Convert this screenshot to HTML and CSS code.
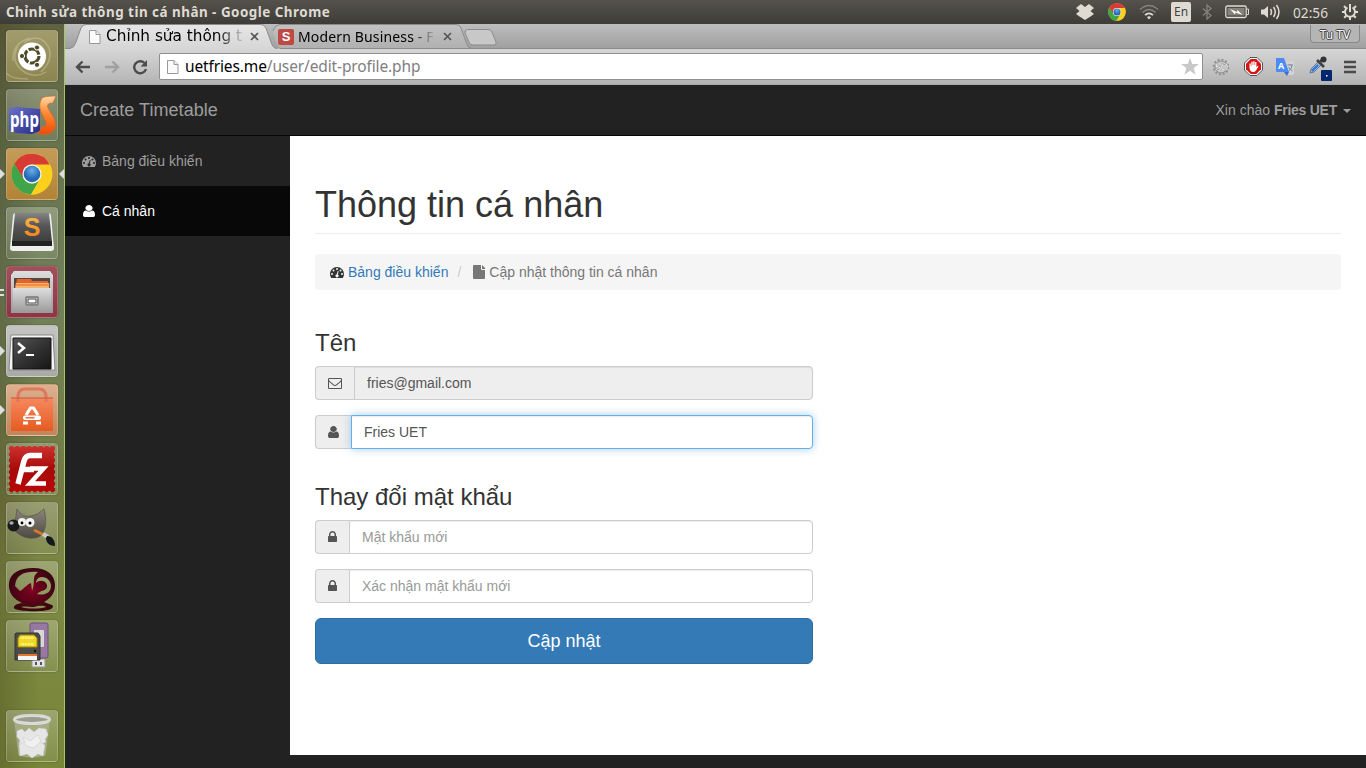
FILE: index.html
```html
<!DOCTYPE html>
<html lang="vi">
<head>
<meta charset="utf-8">
<title>Chỉnh sửa thông tin cá nhân</title>
<link rel="stylesheet" href="styles.css">
</head>
<body>
<svg class="defs" width="0" height="0">
  <defs>
    <linearGradient id="gTab" x2="0" y2="1"><stop stop-color="#e6e6e6"/><stop offset="1" stop-color="#d6d6d6"/></linearGradient>
    <linearGradient id="gTab2" x2="0" y2="1"><stop stop-color="#c2c2c2"/><stop offset="1" stop-color="#b0b0b0"/></linearGradient>
    <linearGradient id="gDark" x2="0" y2="1"><stop stop-color="#858585"/><stop offset=".45" stop-color="#555"/><stop offset="1" stop-color="#3d3d3d"/></linearGradient>
    <linearGradient id="gTerm" x2="1" y2="1"><stop stop-color="#555"/><stop offset=".5" stop-color="#333"/><stop offset="1" stop-color="#161616"/></linearGradient>
    <linearGradient id="gGrey" x2="0" y2="1"><stop stop-color="#dedede"/><stop offset="1" stop-color="#999"/></linearGradient>
    <linearGradient id="gBag" x2="0" y2="1"><stop stop-color="#f5895e"/><stop offset="1" stop-color="#e75b22"/></linearGradient>
    <linearGradient id="gS" x2="0" y2="1"><stop stop-color="#ffc24d"/><stop offset="1" stop-color="#f07818"/></linearGradient>
    <linearGradient id="gPs" x2="0" y2="1"><stop stop-color="#ffd9a8"/><stop offset=".45" stop-color="#fb8a34"/><stop offset="1" stop-color="#f04a08"/></linearGradient>
    <linearGradient id="gPhp" x2="1" y2="1"><stop stop-color="#6a72c8"/><stop offset="1" stop-color="#26298a"/></linearGradient>
    <linearGradient id="gFz" x2="0" y2="1"><stop stop-color="#cf3030"/><stop offset=".5" stop-color="#a80a0a"/><stop offset="1" stop-color="#b80808"/></linearGradient>
    <linearGradient id="gGimp" x2="0" y2="1"><stop stop-color="#8a857a"/><stop offset="1" stop-color="#4d4a43"/></linearGradient>
    <radialGradient id="gWine"><stop stop-color="#84001f"/><stop offset="1" stop-color="#3a0612"/></radialGradient>
    <radialGradient id="gBlue" cy=".3"><stop stop-color="#6aaee6"/><stop offset="1" stop-color="#2468b4"/></radialGradient>
    <symbol id="chrome" viewBox="0 0 42 42">
      <circle cx="21" cy="21" r="20.5" fill="#f9d21c"/>
      <path d="M3.2 10.8A20.5 20.5 0 0 1 38.8 11.5L21 11.5A9.5 9.5 0 0 0 12.8 16.2L12 25.5z" fill="#d83a34"/>
      <path d="M3.2 10.8A20.5 20.5 0 0 0 20 41.500L29.200 25.800A9.500 9.500 0 0 1 12.800 25.800z" fill="#3fa548"/>
      <path d="M20 41.500A20.500 20.500 0 0 0 38.800 12.500H21L29.500 25.500z" fill="#fbd01c"/>
      <circle cx="21" cy="21" r="9.600" fill="#f4f4f4"/><circle cx="21" cy="21" r="8.300" fill="url(#gBlue)"/>
    </symbol>
    <symbol id="page" viewBox="0 0 12 14"><path d="M.5.5h6.500l4 4v9H.5z" fill="#fbfbfb" stroke="#999"/><path d="M7 .5v4h4" fill="#ececec" stroke="#999"/></symbol>
    <symbol id="user" viewBox="256 0 1280 1792" preserveAspectRatio="none"><path d="M1536 1399q0 109-62.500 187t-150.500 78h-854q-88 0-150.500-78t-62.500-187q0-85 8.500-160.500t31.500-152 58.500-131 94-89 134.500-34.500q131 128 313 128t313-128q76 0 134.500 34.500t94 89 58.500 131 31.500 152 8.500 160.500zm-256-887q0 159-112.500 271.500t-271.500 112.500-271.500-112.500-112.500-271.500 112.500-271.500 271.500-112.500 271.500 112.500 112.500 271.500z"/></symbol>
    <symbol id="lock" viewBox="320 0 1152 1792"><path d="M640 768h512v-192q0-106-75-181t-181-75-181 75-75 181v192zm832 96v576q0 40-28 68t-68 28h-960q-40 0-68-28t-28-68v-576q0-40 28-68t68-28h32v-192q0-184 132-316t316-132 316 132 132 316v192h32q40 0 68 28t28 68z"/></symbol>
    <symbol id="mail" viewBox="0 0 1792 1792"><path d="M1664 1504v-768q-32 36-69 66-268 206-426 338-51 43-83 67t-86.500 48.500-102.500 24.500h-2q-48 0-102.500-24.500t-86.500-48.500-83-67q-158-132-426-338-37-30-69-66v768q0 13 9.500 22.500t22.500 9.500h1472q13 0 22.500-9.500t9.500-22.500zm0-1051v-24.500l-.5-13-3-12.500-5.500-9-9-7.500-14-2.500h-1472q-13 0-22.500 9.500t-9.500 22.500q0 168 147 284 193 152 401 317 6 5 35 29.500t46 37.500 44.500 31.500 50.500 27.500 43 9h2q20 0 43-9t50.500-27.500 44.500-31.500 46-37.500 35-29.500q208-165 401-317 54-43 100.500-115.500t46.500-131.500zm128-37v1088q0 66-47 113t-113 47h-1472q-66 0-113-47t-47-113v-1088q0-66 47-113t113-47h1472q66 0 113 47t47 113z"/></symbol>
    <symbol id="dash" viewBox="0 0 14 14"><path fill-rule="evenodd" d="M7 2a7 7 0 0 1 7 7c0 1.300-.4 2.600-1.100 3.700a.6.6 0 0 1-.5.300H1.600a.6.6 0 0 1-.5-.3A7 7 0 0 1 7 2zM2 8a1 1 0 1 0 0 2 1 1 0 0 0 0-2zM3.500 4.500a1 1 0 1 0 0 2 1 1 0 0 0 0-2zM7 3a1 1 0 1 0 0 2 1 1 0 0 0 0-2zM10.500 4.500a1 1 0 1 0 0 2 1 1 0 0 0 0-2zM12 8a1 1 0 1 0 0 2 1 1 0 0 0 0-2zM7.600 6.300a.5.500 0 0 1 1 .2l-.8 3a1.500 1.500 0 1 1-1-.2z"/></symbol>
    <symbol id="file" viewBox="0 0 12 14"><path d="M8 4V0H.8A.8.800 0 0 0 0 .8v12.400c0 .4.400.8.800.8h10.400c.4 0 .8-.4.800-.8V5H9a1 1 0 0 1-1-1zm1 0V.1c.2.100.3.200.5.400l2.100 2.100c.2.200.3.500.4.700V4z"/></symbol>
  </defs>
</svg>

<div class="desktop">
  <header class="panel">
    <div class="panel-title">Chỉnh sửa thông tin cá nhân - Google Chrome</div>
    <div class="tray">
      <svg class="t-drop" width="18" height="16" viewBox="0 0 18 16" fill="#dfdbd2"><path d="M5 0L9 3 13 0 18 4 14.500 7 18 10 14.500 12.500 9 16 3.500 12.500 0 10 3.500 7 0 4z"/></svg>
      <svg class="t-chrome" width="18" height="18"><use href="#chrome"/></svg>
      <svg class="t-wifi" width="20" height="16" viewBox="0 0 20 16" fill="none" stroke-width="1.600"><path d="M1 5.500Q10-2.500 19 5.500" stroke="#85827b"/><path d="M3.500 8.500Q10 2.500 16.500 8.500" stroke="#85827b"/><path d="M6 11.200Q10 7.500 14 11.200" stroke="#dfdbd2"/><path d="M8 13.200Q10 11.400 12 13.200L10 15.500z" fill="#dfdbd2"/></svg>
      <span class="lang">En</span>
      <svg class="t-bt" width="10" height="16" viewBox="0 0 10 16" fill="none" stroke="#85827b" stroke-width="1.300"><path d="M1 4.500l8 7L5 15V1l4 3.500-8 7"/></svg>
      <svg class="t-bat" width="24" height="14" viewBox="0 0 24 14"><rect x=".8" y="1" width="20.400" height="11.500" rx="1.500" fill="none" stroke="#dfdbd2" stroke-width="1.300"/><path d="M22 4h1.500v5.500H22" fill="none" stroke="#dfdbd2"/><path d="M2.500 3h17v7.500h-17z" fill="#85827b"/><path d="M5 4l7 3 .5-2 5 5-7-2.500-.5 2z" fill="#fff"/></svg>
      <svg class="t-vol" width="20" height="16" viewBox="0 0 20 16" fill="none" stroke="#dfdbd2" stroke-width="1.500"><path d="M0 5.500h3L7 2v12l-4-3.500H0z" fill="#dfdbd2" stroke="none"/><path d="M9.500 5q2 3 0 6M12.500 3q3.500 5 0 10M15.500 1q5 7 0 14"/></svg>
      <span class="clock">02:56</span>
      <svg class="t-gear" width="18" height="18" viewBox="0 0 18 18" fill="none" stroke="#dfdbd2" stroke-width="2"><path d="M6.500 4.500a5 5 0 1 0 5 0"/><path d="M9 1v8M9 14v3M1 9h3M14 9h3M3 3l2 2M15 3l-2 2M3.200 14.800l2-2M14.800 14.800l-2-2"/></svg>
    </div>
  </header>

  <div class="workspace">
    <nav class="launcher">
      <div class="tile t-ubuntu"><svg viewBox="0 0 52 52"><g fill="none" stroke="#d8d5a8" stroke-opacity=".4" stroke-width="1.500"><path d="M7 31Q6 13 24 8M18 13Q34 1 43 18 47 31 35 42M12 16Q3 33 20 43 31 48 40 42M1 43Q4 49 22 49"/></g><circle cx="26" cy="26.500" r="14" fill="#fff"/><circle cx="26" cy="26" r="7" fill="none" stroke="#504b29" stroke-width="3.200" stroke-dasharray="13 1.660"/><g fill="#504b29" stroke="#fff"><circle cx="16" cy="26" r="2.600"/><circle cx="31" cy="17.500" r="2.600"/><circle cx="31" cy="34.800" r="2.600"/></g></svg></div>
      <div class="tile t-php"><svg viewBox="0 0 52 52"><path d="M3 19l8-1 23 2v22l-8 3-16-1-7-3z" fill="url(#gPhp)"/><path d="M36 9Q38 7 50 7L47 14Q40 14 42 19L48 29Q52 38 46 43 42 46 32 45L36 38Q41 38 40 33L35 23Q32 15 36 9z" fill="url(#gPs)" stroke="#d9641e" stroke-width=".7"/><text x="4" y="38" class="php-text" textLength="29" lengthAdjust="spacingAndGlyphs">php</text></svg></div>
      <div class="tile t-chr"><i class="run"></i><i class="focus"></i><svg viewBox="0 0 52 52"><use href="#chrome" x="5" y="5" width="42" height="42"/></svg></div>
      <div class="tile t-subl"><svg viewBox="0 0 52 52"><path d="M7 9q0-3 3-3h32q3 0 3 3l3 32q0 3-3 3H7q-3 0-3-3z" fill="#eee"/><path d="M9 6h34l3 29H6z" fill="url(#gDark)"/><path d="M6 34h40v5H6z" fill="#222"/><text x="26" y="29" text-anchor="middle" class="subl-text">S</text></svg></div>
      <div class="tile t-files"><i class="run double"></i><svg viewBox="0 0 52 52"><path d="M8 5h36l3 4v38H5V9z" fill="url(#gGrey)"/><path d="M8 12h36v12H8z" fill="#554640"/><path d="M11 13h14l1 2h16v3H10z" fill="#e3622e"/><path d="M10 17h33v6H9z" fill="#f7b469"/><path d="M9 19h35" stroke="#e2672c"/><path d="M7 22h38v25H7z" fill="url(#gGrey)"/><rect x="20" y="31" width="12" height="8" rx="1" fill="#eee" stroke="#888" stroke-width="2"/><rect x="22" y="33" width="8" height="4" fill="#fff" stroke="#444"/></svg></div>
      <div class="tile t-term"><i class="run"></i><svg viewBox="0 0 52 52"><path d="M5 10h42l2 35H3z" fill="#f5f5f5" stroke="#888"/><path d="M7 13h38v31H7z" fill="url(#gTerm)" stroke="#111"/><path d="M12 18l6 5-6 5" fill="none" stroke="#fff" stroke-width="2.500"/><path d="M20 30h8" stroke="#fff" stroke-width="2"/></svg></div>
      <div class="tile t-soft"><i class="run"></i><svg viewBox="0 0 52 52"><path d="M5 14h42v33H5z" fill="url(#gBag)"/><path d="M12 18v-5q0-8 7-8h14q7 0 7 8v5" fill="none" stroke="#df775b" stroke-width="3"/><path d="M5 14h42" stroke="#c75a38"/><g fill="none" stroke="#fff" stroke-width="3.200"><path d="M20 31l4.500-7h3L32 31M17 39h5M30 39h5"/></g><rect x="17" y="31.500" width="18" height="4.500" rx="2" fill="#fff"/><path d="M19.500 33.800h9" stroke="#e75b22" stroke-width="1.300"/></svg></div>
      <div class="tile t-fz"><svg viewBox="0 0 52 52"><rect x="3" y="3" width="46" height="46" fill="url(#gFz)"/><rect x="2.500" y="2.500" width="47" height="47" fill="none" stroke="#8b9565" stroke-width="3.400" stroke-linecap="round" stroke-dasharray="0 5.875"/><g fill="none" stroke="#fff" stroke-width="5.500"><path d="M12 41L18 18Q19.500 12.500 24 12.500H36M15 26.500H28"/><path d="M24 25.500H37.500L24 40.500H40" stroke-width="4.500"/></g></svg></div>
      <div class="tile t-gimp"><svg viewBox="0 0 52 52"><path d="M11 7q5 9 14 7 7-1 13-7c4 15 1 29-10 29-9 1-15-3-20-8z" fill="url(#gGimp)" stroke="#57534b" stroke-width=".7"/><ellipse cx="7.500" cy="23.500" rx="6" ry="6" fill="#17191b"/><ellipse cx="5.500" cy="21" rx="2.200" ry="1.800" fill="#aaa"/><circle cx="16" cy="20" r="4" fill="#f4f4f4"/><circle cx="24" cy="20.500" r="4.500" fill="#f4f4f4"/><circle cx="16" cy="21" r="1.400"/><circle cx="24" cy="21" r="1.500"/><path d="M28 28l10 5" stroke="#d77728" stroke-width="3"/><path d="M37 32l5 3" stroke="#ccc" stroke-width="4"/><path d="M41 34c5 0 8 4 8 10-5 0-9-3-9-8z" fill="#15181c"/></svg></div>
      <div class="tile t-wine"><svg viewBox="0 0 52 52"><path fill-rule="evenodd" d="M3 22C4 12 14 7 27 7c14 0 22 7 22 17 0 8-4 13-11 17l5 2c5 1 5 3 2 5-5 3-29 3-36 0-3-2 0-5 7-6C7 38 2 31 3 22zm6 3l5 5c4-2 6-6 11-8l1 8c4-9-1-14 6-19-11-1-22 1-23 14zm22 8c7 2 14-1 14-8 0-5-4-9-9-9-4 0-6 3-6 6 5-5 12-1 11 4-1 4-6 3-10 7zm-16 13c6 2 19 2 25 0-3-2-8-1-12 0-5 0-9-1-13 0z" fill="url(#gWine)"/></svg></div>
      <div class="tile t-disk"><svg viewBox="0 0 52 52"><rect x="26" y="39" width="13" height="8" fill="#e6e6e6" stroke="#999"/><path d="M29 42h2v3h-2zm5 0h2v3h-2z" fill="#555"/><rect x="24" y="3" width="18" height="35" rx="2" fill="#9678a0" stroke="#6d5278"/><rect x="28" y="10" width="10" height="17" rx="1" fill="#d8d8d8"/><path d="M10 13h22l2 3v24H9V14z" fill="#4b4c4a" stroke="#353535"/><path d="M12 18l2-3h14l3 3v9H12z" fill="#f0d820" stroke="#a18a00"/><path d="M14 18h14M14 24h14M17 16v3M20 16v3M23 16v3M26 16v3M17 23v3M20 23v3M23 23v3M26 23v3" stroke="#fff19a"/><path d="M12 35h19v5H12z" fill="#f5f5f5"/><path d="M12 35h19" stroke="#e2772c" stroke-width="2"/><circle cx="29" cy="31" r="1.200" fill="#111"/></svg></div>
      <div class="tile t-trash"><svg viewBox="0 0 52 52"><path d="M9 12h34l-4 33q-13 4-26 0z" fill="#b6bda0" fill-opacity=".55" stroke="#a7ae91"/><g fill="#e6e6e6" stroke="#cfcfcf" stroke-width=".6"><path d="M11 21l5-2 3 3 4-4 5 4 5-4 7 1 2 6-3 4 1 3-8 4-6-4-6 5-7-3 1-4-3-3z"/><path d="M13 35l6-4 6 4 7-4 7 4-2 11-5-2-6 4-5-4-7 2z"/><path d="M17 27l7 4 8-6 3 6-7 7-8-2z" fill="#f0f0f0"/></g><ellipse cx="26" cy="9.500" rx="17.500" ry="4" fill="#9a9d8d" stroke="#d9d9d6" stroke-width="3"/></svg></div>
    </nav>

    <main class="browser">
      <div class="tabstrip">
        <div class="tab active"><svg class="tab-shape" width="215" height="25" viewBox="0 0 215 25"><path d="M0 25V24.500H5Q9 24 11 18L16 4Q17.500.500 21 .500H196Q199.500.500 201 4L206 18Q208 24.500 212 24.500H215V25z" fill="url(#gTab)"/><path d="M0 24.500H5Q9 24 11 18L16 4Q17.500.500 21 .500H196Q199.500.500 201 4L206 18Q208 24.500 212 24.500" fill="none" stroke="#8b8b8b"/></svg>
          <svg class="favicon" width="12" height="14"><use href="#page"/></svg><span class="tab-text first">Chỉnh sửa thông t</span><svg class="tab-x" width="9" height="9" viewBox="0 0 9 9"><path d="M1 1l7 7M8 1L1 8" stroke="#555" stroke-width="1.700"/></svg></div>
        <div class="tab other"><svg class="tab-shape" width="202" height="25" viewBox="0 0 202 25"><path d="M11 24L8 20 4 8Q6 .500 12 .500H187Q190.500.500 192 4L197 18Q199 24 201 24.500z" fill="url(#gTab2)"/><path d="M4 7Q6 .500 12 .500H187Q190.500.500 192 4L197 18Q199 24 202 24.500H12" fill="none" stroke="#8b8b8b"/></svg>
          <span class="s-icon">S</span><span class="tab-text second">Modern Business - F</span><svg class="tab-x" width="9" height="9" viewBox="0 0 9 9"><path d="M1 1l7 7M8 1L1 8" stroke="#555" stroke-width="1.700"/></svg></div>
        <svg class="newtab" width="33" height="17" viewBox="0 0 33 17"><path d="M4 .500H24Q27 .500 28 3L32 13Q33 16 30 16H9Q6 16 5 13L1 4Q.500.500 4 .500z" fill="#c8c8c8" stroke="#8b8b8b"/></svg>
        <span class="profile">Tu TV</span>
      </div>
      <div class="toolbar">
        <svg class="b-back" width="16" height="14" viewBox="0 0 16 14" fill="none" stroke="#4c4c4c" stroke-width="2.400"><path d="M15 7H2M7.500 1.500L2 7l5.500 5.500"/></svg>
        <svg class="b-fwd" width="16" height="14" viewBox="0 0 16 14" fill="none" stroke="#a0a0a0" stroke-width="2.400"><path d="M1 7h13M8.500 1.500L14 7l-5.500 5.500"/></svg>
        <svg class="b-rel" width="16" height="16" viewBox="0 0 16 16"><path d="M12.500 4A6 6 0 1 0 14 10" fill="none" stroke="#4c4c4c" stroke-width="2.400"/><path d="M15 1v6.500H8.500z" fill="#4c4c4c"/></svg>
        <div class="omnibox">
          <svg width="12" height="14"><use href="#page"/></svg>
          <span class="url"><b>uetfries.me</b>/user/edit-profile.php</span>
          <svg class="star" width="18" height="17" viewBox="0 0 18 17"><path d="M9 0l2.300 6H18l-5.300 4 2 6.800L9 12.800 3.300 16.800l2-6.800L0 6h6.700z" fill="#c8c8c8"/></svg>
        </div>
        <svg class="e-so" width="18" height="18" viewBox="0 0 18 18"><circle cx="9" cy="9" r="6" fill="#c9c9c9" stroke="#8b8b8b"/><circle cx="9" cy="9" r="7.400" fill="none" stroke="#8f8f8f" stroke-width="1.800" stroke-dasharray="2 1.900"/><text x="9" y="13" text-anchor="middle" class="so-text">SO</text></svg>
        <svg class="e-abp" width="19" height="19" viewBox="0 0 19 19"><path d="M6 .500h7L18.500 6v7L13 18.500H6L.500 13V6z" fill="#fff" stroke="#555"/><path d="M6.700 2h5.600L17 6.700v5.600L12.300 17H6.700L2 12.300V6.700z" fill="#da1414"/><path d="M5.500 11V6.500h1.300V9h.5V4.700h1.400V8h.5V4.200h1.400V8h.5V5h1.300v5l1.500-1.300c.6.300.5.700.2 1.200L12 13.500q-1 1.500-3 1.500-3 0-3.500-4z" fill="#fff"/></svg>
        <svg class="e-tr" width="20" height="20" viewBox="0 0 20 20"><path d="M10 4h8q1 0 1 1v13h-7z" fill="#d2d2d2"/><path d="M1 1h8l5 14H2q-1 0-1-1z" fill="#4c8bf5"/><path d="M9 15h5l-2 4z" fill="#3a6dcc"/><path d="M12.500 8H18m-3-1v1m-1.500 6q3.500-2 3.500-6m-3.500 2q1 2 4 4" fill="none" stroke="#7189a2"/><text x="3" y="12" class="tr-text">A</text></svg>
        <svg class="e-pick" width="24" height="25" viewBox="0 0 24 25"><path d="M2 17l1-4 7-7 3 3-7 7z" fill="#8bbcf0" stroke="#6a7785"/><path d="M4 15l6-6" stroke="#2f6ccf" stroke-width="1.800"/><path d="M9 4l7 7M11 7l4-4" stroke="#444" stroke-width="2.800"/><circle cx="15.500" cy="3.500" r="3" fill="#333"/><rect x="13" y="14" width="11" height="11" rx="1" fill="#04266f"/><path d="M18 19h1.500v1.500H18z" fill="#fff"/></svg>
        <svg class="e-menu" width="14" height="14" viewBox="0 0 14 14"><path d="M1 2h12M1 7h12M1 12h12" stroke="#4a4a4a" stroke-width="2.600"/></svg>
      </div>

      <div class="site">
        <header class="navbar"><span class="brand">Create Timetable</span><span class="greet">Xin chào <b>Fries UET</b><i class="caret"></i></span></header>
        <div class="site-body">
          <aside class="sidebar">
            <div class="side-item"><span class="fw"><svg width="14" height="14"><use href="#dash"/></svg></span>Bảng điều khiển</div>
            <div class="side-item current"><span class="fw"><svg width="12" height="14"><use href="#user"/></svg></span>Cá nhân</div>
          </aside>
          <section class="content">
            <h1>Thông tin cá nhân</h1>
            <div class="breadcrumb"><svg width="14" height="14" class="bc-dash"><use href="#dash"/></svg><a>Bảng điều khiển</a><span class="sep">/</span><svg width="12" height="14" class="bc-file"><use href="#file"/></svg><span class="here">Cập nhật thông tin cá nhân</span></div>
            <form class="form">
              <h3>Tên</h3>
              <div class="group disabled"><span class="addon"><svg width="14" height="14"><use href="#mail"/></svg></span><div class="field">fries@gmail.com</div></div>
              <div class="group focused"><span class="addon"><svg width="11" height="14"><use href="#user"/></svg></span><div class="field">Fries UET</div></div>
              <h3 class="second-title">Thay đổi mật khẩu</h3>
              <div class="group"><span class="addon"><svg width="9" height="14"><use href="#lock"/></svg></span><div class="field empty">Mật khẩu mới</div></div>
              <div class="group"><span class="addon"><svg width="9" height="14"><use href="#lock"/></svg></span><div class="field empty">Xác nhận mật khẩu mới</div></div>
              <div class="submit">Cập nhật</div>
            </form>
          </section>
        </div>
      </div>
    </main>
  </div>
</div>
</body>
</html>
```
FILE: styles.css
```css
* { box-sizing: border-box; }
body { margin: 0; width: 1366px; height: 768px; overflow: hidden; font-family: "Liberation Sans", Arial, sans-serif; }
svg { display: block; flex: none; }
.defs { position: absolute; }
.desktop { width: 1366px; height: 768px; display: flex; flex-direction: column; }

.panel { height: 24px; flex: none; display: flex; justify-content: space-between; background: linear-gradient(#55524b, #3d3c38); color: #dfdbd2; font-family: "Noto Sans", sans-serif; }
.panel-title { padding-left: 6px; font-size: 13.4px; font-weight: 700; line-height: 24px; letter-spacing: .5px; white-space: nowrap; }
.tray { display: flex; align-items: center; padding-right: 7px; }
.t-chrome { margin-left: 14px; }
.t-wifi { margin-left: 13px; }
.lang { margin-left: 12px; width: 20px; height: 20px; border-radius: 2px; background: #dfdbd2; color: #45433e; font-size: 12px; line-height: 20px; text-align: center; }
.t-bt { margin-left: 11px; }
.t-bat { margin-left: 13px; }
.t-vol { margin-left: 12px; }
.clock { margin-left: 12px; width: 36px; font-size: 13.7px; white-space: nowrap; }
.t-gear { margin-left: 12px; }

.workspace { flex: 1; display: flex; min-height: 0; }
.launcher { width: 65px; flex: none; display: flex; flex-direction: column; gap: 7px; padding: 6px 0 0 6px; border-right: 1px solid #a9c46a; background: linear-gradient(90deg, rgba(40,30,10,.22), rgba(0,0,0,0) 60%), linear-gradient(#60633f 0, #66734d 15%, #71805a 35%, #72804c 52%, #747a42 62%, #7d8944 75%, #788638 100%); }
.tile { position: relative; width: 52px; height: 52px; flex: none; border-radius: 4px; border: 1px solid rgba(255,255,255,.2); background: linear-gradient(rgba(255,255,255,.26), rgba(255,255,255,.08)); box-shadow: 0 0 2px rgba(0,0,0,.3); }
.tile svg { width: 52px; height: 52px; margin: -1px; overflow: visible; }
.t-ubuntu { background: linear-gradient(#a29c6d, #8c8551); }
.t-chr { background: linear-gradient(#c49b59, #b18436); }
.t-files { background: linear-gradient(#a0505a, #8d3544); }
.t-term { background: linear-gradient(#c4c4c2, #a9a9a6); }
.t-soft { background: linear-gradient(#dcb190, #c1855a); }
.t-trash { margin-top: 31px; }
.run { position: absolute; left: -7px; top: 20px; border: 5px solid transparent; border-left-color: #dedede; border-right: 0; }
.run.double { top: 22px; width: 4px; height: 7px; border: 2px solid #dedede; border-width: 2px 0; }
.focus { position: absolute; right: -7px; top: 20px; border: 5px solid transparent; border-right-color: #dedede; border-left: 0; }
.php-text { font: bold 22px "Noto Sans", sans-serif; fill: #fff; }
.subl-text { font: bold 25px "Liberation Sans", sans-serif; fill: url(#gS); }

.browser { flex: 1; display: flex; flex-direction: column; min-width: 0; }
.tabstrip { height: 25px; flex: none; display: flex; background: linear-gradient(#bdbdbd, #a0a0a0); border-bottom: 1px solid #8b8b8b; }
.tab { position: relative; height: 25px; flex: none; display: flex; align-items: center; }
.tab > * { position: relative; }
.tab .tab-shape { position: absolute; left: 0; top: 0; }
.tab.active { width: 204px; padding-left: 24px; z-index: 1; }
.tab.other { width: 195px; padding-left: 9px; }
.tab-text { font-family: "Noto Sans", sans-serif; font-size: 15px; line-height: 25px; white-space: nowrap; overflow: hidden; color: transparent; background-clip: text; -webkit-background-clip: text; }
.first { width: 138px; margin-left: 5px; font-family: "DejaVu Sans", sans-serif; font-size: 15.3px; background-image: linear-gradient(90deg, #000 80%, #bbb 98%); }
.tab-x { margin-left: 8px; }
.first + .tab-x { margin-left: 6px; }
.second { width: 137px; margin-left: 4px; font-size: 14px; letter-spacing: .15px; background-image: linear-gradient(90deg, #000 84%, #aaa 99%); }
.s-icon { width: 16px; height: 16px; border-radius: 2px; background: #bf4a43; color: #fff; font: bold 13px/16px "Liberation Sans", sans-serif; text-align: center; }
.newtab { margin-top: 5px; }
.profile { margin: 1px 6px 0 auto; width: 50px; height: 18px; border: 1px solid #888; border-top: 0; border-radius: 0 0 4px 4px; background: #b5b5b5; color: #fff; font: 12px/19px "Noto Sans", sans-serif; text-align: center; text-shadow: 1px 0 #444, -1px 0 #444, 0 1px #444, 0 -1px #444; }

.toolbar { height: 36px; flex: none; display: flex; align-items: center; padding-left: 10px; background: linear-gradient(#d6d6d6, #b4b4b4); border-bottom: 1px solid #a9a9a9; }
.b-fwd { margin-left: 13px; }
.b-rel { margin-left: 12px; }
.omnibox { margin-left: 11px; width: 1044px; height: 27px; display: flex; align-items: center; padding: 0 3px 0 7px; background: #fff; border: 1px solid #8f8f8f; border-radius: 2px; }
.url { flex: 1; margin: -2px 0 0 6px; font-family: "Noto Sans", sans-serif; font-size: 15.5px; letter-spacing: -.13px; color: #808080; }
.url b { font-weight: 400; color: #000; }
.e-so { margin-left: 9px; }
.so-text { font: bold 10px "Liberation Sans", sans-serif; fill: #fff; stroke: #777; stroke-width: .4px; letter-spacing: -1px; }
.e-abp { margin-left: 14px; }
.e-tr { margin-left: 12px; }
.tr-text { font: bold 9px "Open Sans", sans-serif; fill: #fff; }
.e-pick { margin: 3px 0 0 13px; }
.e-menu { margin-left: 11px; }

.site { flex: 1; display: flex; flex-direction: column; background: #222; font-size: 14px; line-height: 20px; color: #333; }
.navbar { height: 51px; flex: none; display: flex; justify-content: space-between; padding: 0 15px; border-bottom: 1px solid #080808; color: #9d9d9d; line-height: 50px; }
.brand { font-size: 18px; letter-spacing: .05px; }
.greet b { letter-spacing: -.25px; }
.caret { display: inline-block; margin-left: 6px; vertical-align: middle; border: 4px solid transparent; border-top-color: #9d9d9d; border-bottom: 0; }
.site-body { height: 619px; display: flex; }
.sidebar { width: 225px; flex: none; }
.side-item { height: 50px; display: flex; align-items: center; padding-left: 15px; color: #9d9d9d; fill: #9d9d9d; }
.side-item.current { background: #080808; color: #fff; fill: #fff; }
.fw { width: 18px; margin-right: 4px; display: flex; justify-content: center; }
.content { flex: 1; background: #fff; padding: 49px 25px 0; }
h1 { margin: 0; height: 49px; font-size: 36px; font-weight: 400; line-height: 40px; border-bottom: 1px solid #eee; }
.breadcrumb { margin-top: 20px; height: 36px; display: flex; align-items: center; padding-left: 15px; background: #f5f5f5; border-radius: 4px; fill: #333; }
.breadcrumb a { margin-left: 4px; color: #337ab7; }
.sep { margin-left: 9px; color: #ccc; }
.bc-file { margin-left: 12px; fill: #777; }
.here { margin-left: 4px; color: #777; }
.form { width: 498px; margin-top: 40px; }
h3 { margin: 0 0 10px; font-size: 24px; font-weight: 400; line-height: 26px; }
.group { height: 34px; margin-bottom: 15px; display: flex; }
.addon { display: flex; align-items: center; padding: 0 12px; background: #eee; border: 1px solid #ccc; border-right: 0; border-radius: 4px 0 0 4px; fill: #555; }
.field { flex: 1; padding: 0 12px; line-height: 32px; color: #555; border: 1px solid #ccc; border-radius: 0 4px 4px 0; background: #fff; box-shadow: inset 0 1px 1px rgba(0,0,0,.075); }
.disabled .field { background: #eee; }
.focused .field { border-color: #66afe9; box-shadow: inset 0 1px 1px rgba(0,0,0,.075), 0 0 8px rgba(102,175,233,.6); }
.field.empty { color: #999; }
.second-title { margin-top: 35px; }
.submit { height: 46px; border: 1px solid #2e6da4; border-radius: 6px; background: #337ab7; color: #fff; font-size: 18px; line-height: 44px; text-align: center; }
```
